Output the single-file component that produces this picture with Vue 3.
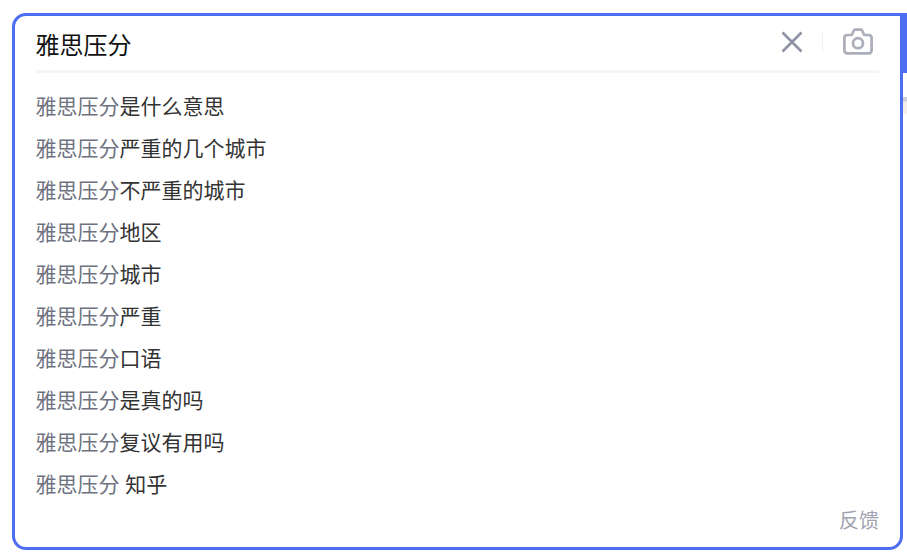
<script setup>
const items = [
  ['雅思压分', '是什么意思'],
  ['雅思压分', '严重的几个城市'],
  ['雅思压分', '不严重的城市'],
  ['雅思压分', '地区'],
  ['雅思压分', '城市'],
  ['雅思压分', '严重'],
  ['雅思压分', '口语'],
  ['雅思压分', '是真的吗'],
  ['雅思压分', '复议有用吗'],
  ['雅思压分', ' 知乎'],
]
</script>

<template>
  <div class="page">
    <div class="button-edge"></div>
    <div class="peek"></div>
    <div class="box">
      <div class="head">
        <div class="query">雅思压分</div>
        <svg class="close" width="22" height="22" viewBox="0 0 22 22">
          <path d="M1.5 1.5 20.5 20.5M20.5 1.5 1.5 20.5" fill="none" stroke="#8f93a3" stroke-width="2.6" />
        </svg>
        <span class="sep"></span>
        <svg class="camera" width="30" height="27" viewBox="0 0 30 27">
          <path d="M4.5 7H8.8L10.6 3C10.9 2.2 11.4 1.7 12 1.7H18C18.6 1.7 19.1 2.2 19.4 3L21.2 7H25.5C27.4 7 28.6 8.2 28.6 10.1V22.2C28.6 24.1 27.4 25.3 25.5 25.3H4.5C2.6 25.3 1.4 24.1 1.4 22.2V10.1C1.4 8.2 2.6 7 4.5 7Z" fill="none" stroke="#acafbb" stroke-width="2.7" stroke-linejoin="round" />
          <circle cx="15" cy="15.2" r="5" fill="none" stroke="#acafbb" stroke-width="2.7" />
        </svg>
      </div>
      <ul class="list">
        <li v-for="item in items" :key="item[1]" class="row"><span class="hit">{{ item[0] }}</span>{{ item[1] }}</li>
      </ul>
      <div class="foot">反馈</div>
    </div>
  </div>
</template>

<style scoped>
.page {
  position: relative;
  width: 907px;
  height: 553px;
  padding: 13px 4px 3px 12px;
  box-sizing: border-box;
  overflow: hidden;
  background: #fff;
  font-family: "Liberation Sans", "Noto Sans CJK SC", sans-serif;
}
.button-edge {
  position: absolute;
  right: 0;
  top: 13px;
  width: 8px;
  height: 60px;
  background: #4e6ef2;
}
.peek {
  position: absolute;
  right: 0;
  top: 97px;
  width: 4px;
  height: 17px;
  background: linear-gradient(to bottom, #cfd0d7 0 4px, #f6eee8 5px);
}
.box {
  position: relative;
  height: 537px;
  box-sizing: border-box;
  border: 3px solid #4e6ef2;
  border-radius: 14px 0 14px 14px;
  background: #fff;
  padding: 0 21px;
}
.head {
  display: flex;
  align-items: center;
  height: 52px;
  padding-bottom: 2px;
  border-bottom: 3px solid #f5f5f6;
}
.query {
  flex: 1;
  font-size: 24px;
  line-height: 32px;
  color: #111;
  margin: 8px 0 0 -0.5px;
}
.close {
  margin-top: -1px;
  margin-right: 19px;
}
.sep {
  width: 1px;
  height: 20px;
  margin-top: -1px;
  margin-right: 20px;
  background: #f0f0f2;
}
.camera {
  margin-top: -1px;
  margin-right: 6px;
}
.list {
  list-style: none;
  margin: 13px 0 0 -0.5px;
  padding: 0;
}
.row {
  height: 42px;
  line-height: 42px;
  font-size: 21px;
  color: #333;
  white-space: pre;
}
.hit {
  color: #6e7280;
}
.foot {
  text-align: right;
  font-size: 20px;
  line-height: 30px;
  color: #a0a3af;
}
</style>
